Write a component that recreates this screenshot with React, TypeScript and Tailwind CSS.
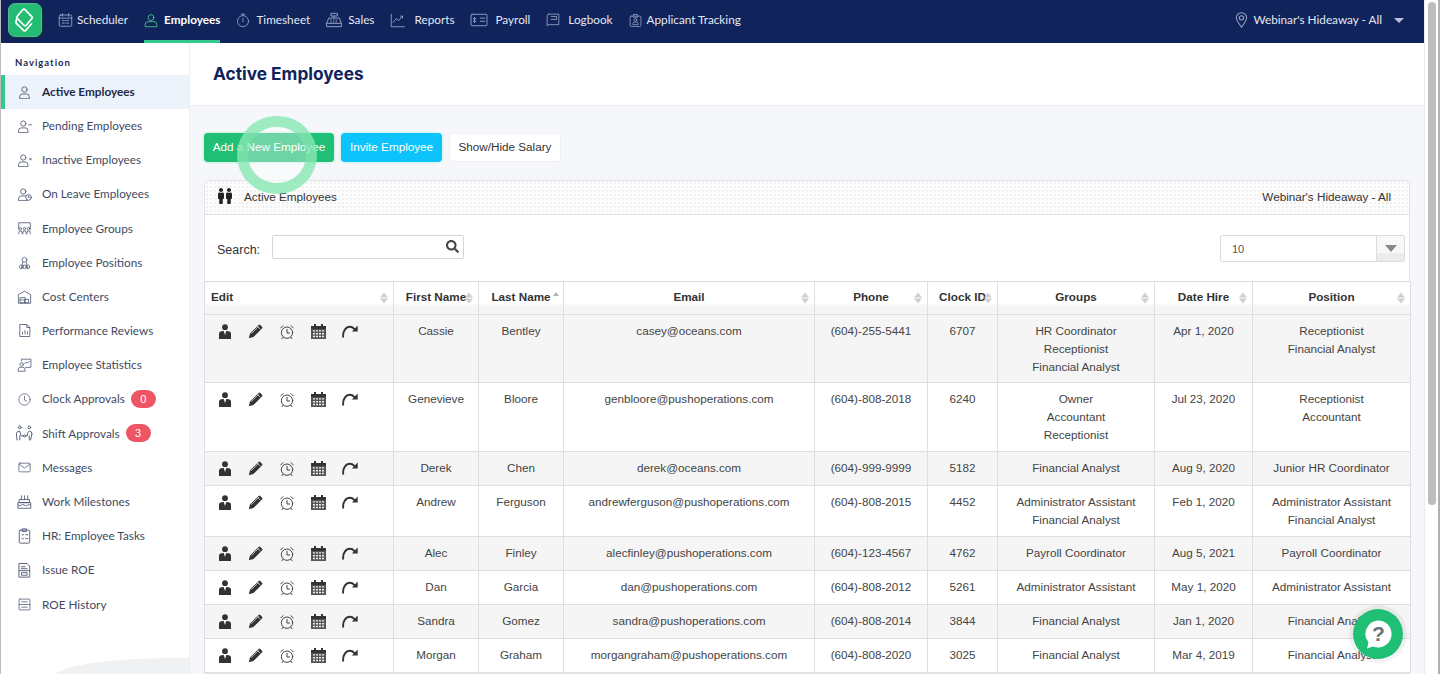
import React from "react";
import { FaSearch, FaMale } from "react-icons/fa";

type P = { children: React.ReactNode; w?: number; h?: number; vb?: string; c?: string };
const S = ({ children, w = 16, h = 16, vb = "0 0 24 24", c = "" }: P) => (
  <svg width={w} height={h} viewBox={vb} fill="none" stroke="currentColor" strokeWidth={1.4} strokeLinecap="round" strokeLinejoin="round" className={c}>
    {children}
  </svg>
);

const person = (
  <>
    <circle cx="10" cy="7" r="4.2" />
    <path d="M2.5 21v-2.5A4.5 4.5 0 0 1 7 14h6a4.5 4.5 0 0 1 4.5 4.5V21Z" />
  </>
);

const navItems: { label: string; icon: React.ReactNode; gap: string; active?: boolean }[] = [
  { label: "Scheduler", gap: "gap-[4px]", icon: <S w={15} h={16}><rect x="2" y="4" width="20" height="18" rx="2" /><path d="M7 2v4M17 2v4M2 9h20M7 13h2M11 13h2M15 13h2M7 17h2M11 17h2M15 17h2" /></S> },
  { label: "Employees", gap: "gap-[6px]", active: true, icon: <S w={14} h={17}><circle cx="12" cy="7" r="5" /><path d="M2 22v-3a5 5 0 0 1 5-5h10a5 5 0 0 1 5 5v3Z" /></S> },
  { label: "Timesheet", gap: "gap-[6px]", icon: <S w={14} h={16}><circle cx="12" cy="14" r="9.5" /><path d="M12 9v6M9 2h6M12 2v2.5" /></S> },
  { label: "Sales", gap: "gap-[6px]", icon: <S w={16} h={16}><rect x="8" y="2" width="9" height="4" /><path d="M12 6v3M5 9h15l3 8v5H1v-5ZM1 17h22M7 12h1M11 12h1M15 12h1M7 15h1M11 15h1M15 15h1" /></S> },
  { label: "Reports", gap: "gap-[9px]", icon: <S w={15} h={15}><path d="M2 2v20h21M5 15l5-6 4 3 6-7M17 5h3v3" /></S> },
  { label: "Payroll", gap: "gap-[7px]", icon: <S w={18} h={14} vb="0 0 28 22"><rect x="1.5" y="2" width="25" height="18" rx="1.5" /><path d="M16 8h7M16 13h7M7 7v8M5 9h4M5 13h4" /></S> },
  { label: "Logbook", gap: "gap-[8px]", icon: <S w={14} h={16}><path d="M5 2h17v18H5a3 3 0 0 0-3 2V5a3 3 0 0 1 3-3Z" /><path d="M9 6h9v5H9" /></S> },
  { label: "Applicant Tracking", gap: "gap-[5px]", icon: <S w={13} h={17}><rect x="2" y="4" width="20" height="19" rx="2" /><rect x="8" y="1" width="8" height="5" rx="1" /><circle cx="12" cy="11" r="2.6" /><path d="M7 19v-1a3 3 0 0 1 3-3h4a3 3 0 0 1 3 3v1Z" /></S> },
];

const sideItems: { label: string; icon: React.ReactNode; badge?: string; active?: boolean }[] = [
  { label: "Active Employees", active: true, icon: <S w={13} h={14} vb="0 0 20 22">{person}</S> },
  { label: "Pending Employees", icon: <S w={15} h={14} vb="0 0 24 22">{person}<path d="M19 9h4" /></S> },
  { label: "Inactive Employees", icon: <S w={15} h={14} vb="0 0 24 22">{person}<path d="m20 8 3 3M23 8l-3 3" /></S> },
  { label: "On Leave Employees", icon: <S w={15} h={14} vb="0 0 24 22">{person}<circle cx="18.5" cy="16.5" r="4.5" fill="#fff" /><path d="M18.5 14.5v2h1.6" /></S> },
  { label: "Employee Groups", icon: <S w={15} h={14}><path d="M2 14V3h20v11" /><circle cx="5" cy="13" r="2" /><circle cx="12" cy="13" r="2" /><circle cx="19" cy="13" r="2" /><path d="M2 22l1-5h4l1 5M9 22l1-5h4l1 5M16 22l1-5h4l1 5" /></S> },
  { label: "Employee Positions", icon: <S w={13} h={14}><circle cx="12" cy="6" r="4.5" /><path d="M9 10l-3 12M15 10l3 12" /><circle cx="6" cy="19" r="3.5" /><circle cx="12" cy="19" r="3.5" /><circle cx="18" cy="19" r="3.5" /></S> },
  { label: "Cost Centers", icon: <S w={15} h={14}><path d="M1.5 22V8L12 2l10.5 6v14Z" /><rect x="5" y="13" width="8" height="9" /><rect x="13" y="16" width="6" height="6" /><path d="M5 17h8" /></S> },
  { label: "Performance Reviews", icon: <S w={12} h={15} vb="0 0 20 24"><path d="M2 2h11l5 5v15H2Z" /><path d="M13 2v5h5M6 18v-3M10 18v-6M14 18v-4" /></S> },
  { label: "Employee Statistics", icon: <S w={15} h={14}><circle cx="7" cy="11" r="3" /><path d="M1 22v-2a4 4 0 0 1 4-4h4a4 4 0 0 1 4 4v2ZM7 5V2h16v14H14M12 10l3-3 2 2 3-3" /></S> },
  { label: "Clock Approvals", badge: "0", icon: <S w={13} h={13}><circle cx="12" cy="12" r="10.5" /><path d="M12 6v7l4 2" /></S> },
  { label: "Shift Approvals", badge: "3", icon: <S w={19} h={17} vb="0 0 28 25"><circle cx="7" cy="3.5" r="2" /><circle cx="21" cy="3.5" r="2" /><path d="M3 22l-1-9q0-4 5-4l2 7h3M25 13q0-4-4-4-2 0-3 7h-2M23 22l2-9M7 22v-6M21 22v-6" /><circle cx="14" cy="16" r="1.6" /></S> },
  { label: "Messages", icon: <S w={13} h={11} vb="0 0 24 20"><rect x="1.5" y="2" width="21" height="16" rx="2" /><path d="m2 4 10 7 10-7" /></S> },
  { label: "Work Milestones", icon: <S w={15} h={16}><path d="M7 2v6M12 2v6M17 2v6M4 8h16v5H4ZM2 13h20v9H2ZM2 17q3 2 5 0t5 0 5 0 5 0" /></S> },
  { label: "HR: Employee Tasks", icon: <S w={13} h={16} vb="0 0 20 24"><rect x="2" y="3" width="16" height="20" rx="1.5" /><rect x="7" y="1" width="6" height="4" /><path d="M6 10l1 1 2-2M12 10h3M6 16l1 1 2-2M12 16h3" /></S> },
  { label: "Issue ROE", icon: <S w={13} h={16} vb="0 0 20 24"><path d="M2 2h12l4 4v17H2Z" /><path d="M5 7h6M5 10h9M2 13h16M6 16h8v4H6Z" /></S> },
  { label: "ROE History", icon: <S w={13} h={13}><rect x="2" y="2" width="20" height="20" rx="1.5" /><path d="M7 7h10M2 12h20M7 17h10" /></S> },
];

type Row = { first: string; last: string; email: string; phone: string; id: string; groups: string[]; hire: string; pos: string[]; h: string };
const rows: Row[] = [
  { first: "Cassie", last: "Bentley", email: "casey@oceans.com", phone: "(604)-255-5441", id: "6707", groups: ["HR Coordinator", "Receptionist", "Financial Analyst"], hire: "Apr 1, 2020", pos: ["Receptionist", "Financial Analyst"], h: "h-[68px]" },
  { first: "Genevieve", last: "Bloore", email: "genbloore@pushoperations.com", phone: "(604)-808-2018", id: "6240", groups: ["Owner", "Accountant", "Receptionist"], hire: "Jul 23, 2020", pos: ["Receptionist", "Accountant"], h: "h-[69px]" },
  { first: "Derek", last: "Chen", email: "derek@oceans.com", phone: "(604)-999-9999", id: "5182", groups: ["Financial Analyst"], hire: "Aug 9, 2020", pos: ["Junior HR Coordinator"], h: "h-[34px]" },
  { first: "Andrew", last: "Ferguson", email: "andrewferguson@pushoperations.com", phone: "(604)-808-2015", id: "4452", groups: ["Administrator Assistant", "Financial Analyst"], hire: "Feb 1, 2020", pos: ["Administrator Assistant", "Financial Analyst"], h: "h-[51px]" },
  { first: "Alec", last: "Finley", email: "alecfinley@pushoperations.com", phone: "(604)-123-4567", id: "4762", groups: ["Payroll Coordinator"], hire: "Aug 5, 2021", pos: ["Payroll Coordinator"], h: "h-[34px]" },
  { first: "Dan", last: "Garcia", email: "dan@pushoperations.com", phone: "(604)-808-2012", id: "5261", groups: ["Administrator Assistant"], hire: "May 1, 2020", pos: ["Administrator Assistant"], h: "h-[34px]" },
  { first: "Sandra", last: "Gomez", email: "sandra@pushoperations.com", phone: "(604)-808-2014", id: "3844", groups: ["Financial Analyst"], hire: "Jan 1, 2020", pos: ["Financial Analyst"], h: "h-[34px]" },
  { first: "Morgan", last: "Graham", email: "morgangraham@pushoperations.com", phone: "(604)-808-2020", id: "3025", groups: ["Financial Analyst"], hire: "Mar 4, 2019", pos: ["Financial Analyst"], h: "h-[34px]" },
];

const Sort = ({ asc }: { asc?: boolean }) =>
  asc ? (
    <span className="absolute right-[4px] top-[10px] block w-0 h-0 border-x-[3px] border-x-transparent border-b-[4px] border-b-[#b5b5b5]" />
  ) : (
    <span className="absolute right-[5px] top-1/2 -translate-y-1/2 flex flex-col gap-[1px]">
      <span className="block w-0 h-0 border-x-[4px] border-x-transparent border-b-[5px] border-b-[#cfcfcf]" />
      <span className="block w-0 h-0 border-x-[4px] border-x-transparent border-t-[5px] border-t-[#cfcfcf]" />
    </span>
  );

const cols: { t: string; w: string; left?: boolean }[] = [
  { t: "Edit", w: "w-[189px]", left: true },
  { t: "First Name", w: "w-[85px]" },
  { t: "Last Name", w: "w-[85px]" },
  { t: "Email", w: "w-[251px]" },
  { t: "Phone", w: "w-[113px]" },
  { t: "Clock ID", w: "w-[70px]" },
  { t: "Groups", w: "w-[157px]" },
  { t: "Date Hire", w: "w-[98px]" },
  { t: "Position", w: "w-[158px]" },
];

const RowIcons = () => (
  <div className="flex items-center gap-[16px] pl-[12.5px] pt-[9px] h-[24px] text-[#333]">
    <svg width="14" height="15" viewBox="0 0 14 15" fill="#333"><circle cx="7" cy="3.2" r="2.9" /><path d="M1 15V9.5Q1 7.4 3.2 7.2L5.7 7 7 11l1.3-4 2.5.2Q13 7.4 13 9.5V15Z" /></svg>
    <svg width="15" height="15" viewBox="0 0 15 15" fill="#333"><path d="M.8 14.2 2 9.6 10.6 1a1.2 1.2 0 0 1 1.7 0L14 2.7a1.2 1.2 0 0 1 0 1.7L5.4 13Z" /><path d="M3.2 9.7 10.8 2.1M9.6 2.4l3 3" stroke="#f5f5f5" strokeWidth=".7" fill="none" /></svg>
    <svg width="16" height="16" viewBox="0 0 24 24" fill="none" stroke="#444" strokeWidth="1.5" strokeLinecap="round"><circle cx="12" cy="13" r="8.5" /><path d="M12 8v5.5h4M2.5 6 6 2.5M21.5 6 18 2.5M6 20l-1.5 2M18 20l1.5 2" /></svg>
    <svg width="15" height="15" viewBox="0 0 15 15"><path fill="#555" d="M0 2h15v13H0Z" /><path fill="#333" d="M0 2h15v3H0ZM3 0h2v3H3ZM10 0h2v3h-2Z" /><path fill="#eee" d="M2 6.2h2v1.4H2ZM5 6.2h2v1.4H5ZM8 6.2h2v1.4H8ZM11 6.2h2v1.4h-2ZM2 9h2v1.4H2ZM5 9h2v1.4H5ZM8 9h2v1.4H8ZM11 9h2v1.4h-2ZM2 11.8h2v1.4H2ZM5 11.8h2v1.4H5ZM8 11.8h2v1.4H8ZM11 11.8h2v1.4h-2Z" /></svg>
    <svg width="16" height="13" viewBox="0 0 16 13" fill="none"><path d="M1.2 11.8C.6 6 4 1.8 8 1.8c1.6 0 3 .7 4.2 2" stroke="#333" strokeWidth="1.9" strokeLinecap="round" /><path d="M15.7 .6v5.8h-5.8Z" fill="#333" /></svg>
  </div>
);

const cell = "border border-[#dedede] pt-[6.5px] align-top";

export default function App() {
  return (
    <div className="relative h-[674px] w-[1440px] overflow-hidden bg-white font-['Lato',sans-serif] flex">
      <div className="w-[1424px] flex flex-col border-l border-l-[#bdbdbd] shrink-0">
        {/* Top navigation */}
        <header className="h-[43px] shrink-0 bg-[#10235b] flex items-stretch text-[11.75px] text-[#e4e8f2]">
          <div className="ml-[7px] mt-[3px] w-[34px] h-[34px] rounded-[7px] bg-[#22bd72] border border-[#5fb592] shadow-[1px_1px_0_#0b3a3a] shrink-0">
            <svg width="32" height="32" viewBox="0 1 32 32" fill="none" stroke="#fff" strokeWidth="1.7" strokeLinejoin="round">
              <path d="M8 13.5 14 6.5a1.2 1.2 0 0 1 1.7-.1l7.3 7.4a1.2 1.2 0 0 1 0 1.6L17 22.5a1.2 1.2 0 0 1-1.7 0L8 15.2a1.2 1.2 0 0 1 0-1.7Z" />
              <path d="M8 14.5 7 19a1.5 1.5 0 0 0 .4 1.4l7.4 7.2a1.2 1.2 0 0 0 1.7 0l6.5-7.4" />
            </svg>
          </div>
          <nav className="ml-[16px] flex items-stretch gap-[16px]">
            {navItems.map((n) => (
              <div key={n.label} className={`relative flex items-center pb-[3px] ${n.gap} ${n.active ? "text-white font-bold" : ""}`}>
                <span className={n.active ? "text-[#4fd08f]" : "text-[#9aa7c7]"}>{n.icon}</span>
                <span className="whitespace-nowrap">{n.label}</span>
                {n.active && <span className="absolute left-0 right-0 bottom-0 h-[3px] bg-[#34c98a]" />}
              </div>
            ))}
          </nav>
          <div className="ml-auto mr-[20px] flex items-center pb-[3px]">
            <svg width="13" height="16" viewBox="0 0 16 22" fill="none" stroke="#9aa7c7" strokeWidth="1.4" className="mr-[5px]"><path d="M8 21C4 15 1 12 1 8a7 7 0 0 1 14 0c0 4-3 7-7 13Z" /><circle cx="8" cy="8" r="3" /></svg>
            <span className="mr-[1px]">Webinar's Hideaway - All</span>
            <span className="ml-[11px] w-0 h-0 border-x-[5px] border-x-transparent border-t-[5px] border-t-[#b9c2d9]" />
          </div>
        </header>

        <div className="flex-1 flex min-h-0">
          {/* Sidebar */}
          <aside className="relative w-[189px] shrink-0 bg-white border-r border-r-[#eceef2] text-[11.75px] text-[#414a63] overflow-hidden">
            <div className="h-[32px] pl-[14px] pt-[14px] text-[9.5px] leading-[12px] font-bold tracking-[1px] text-[#1b2a55]">Navigation</div>
            <ul className="flex flex-col">
              {sideItems.map((s) => (
                <li key={s.label} className={`h-[34.2px] flex items-center pb-[1px] ${s.active ? "bg-[#edf3fa] text-[#1f2a4a] font-bold border-l-[4px] border-l-[#34c98a]" : ""}`}>
                  <span className={`flex justify-center w-[19px] mr-[8px] text-[#525b75] shrink-0 ${s.active ? "ml-[10px]" : "ml-[14px]"}`}>{s.icon}</span>
                  <span className="whitespace-nowrap">{s.label}</span>
                  {s.badge && <span className="ml-[6px] h-[18px] w-[25px] rounded-full bg-[#ee5565] text-white text-[11px] font-['Liberation_Sans',sans-serif] flex items-center justify-center">{s.badge}</span>}
                </li>
              ))}
            </ul>
            <svg width="134" height="17" viewBox="0 0 134 17" fill="#f0f1f3" stroke="none" className="absolute right-0 bottom-0"><path d="M0 17C15 7 55 1 134 1v16Z" /></svg>
          </aside>

          {/* Main */}
          <main className="flex-1 min-w-0 bg-[#f5f7fb] font-['Liberation_Sans',sans-serif] text-[11.7px] text-[#333] overflow-hidden">
            <div className="h-[63px] bg-white border-b border-b-[#eceef2] pl-[23px] pt-[20px]">
              <h1 className="font-['Inter',sans-serif] font-bold text-[17.3px] leading-[22px] text-[#10235b]">Active Employees</h1>
            </div>
            <div className="pl-[14px] pr-[14px] pt-[27px]">
              <div className="flex gap-[7px] h-[29px]">
                <button className="w-[130px] pb-[1px] rounded-[4px] bg-[#1fbf75] text-white shadow-[0_0_3px_#9be8c0]">Add a New Employee</button>
                <button className="w-[101px] pb-[1px] rounded-[4px] bg-[#0cc4fb] text-white shadow-[0_0_3px_#9beee8]">Invite Employee</button>
                <button className="w-[112px] pb-[1px] rounded-[4px] bg-white text-[#333] border border-[#eef0f4]">Show/Hide Salary</button>
              </div>
              <section className="mt-[18px] bg-white border border-[#e4e4e4] rounded-t-[2px]">
                <div className="h-[34px] flex items-center justify-between pl-[12px] pr-[18px] pb-[2px] border-b border-b-[#e4e4e4] bg-[#fcfcfc] bg-[radial-gradient(#f0f0f0_1px,transparent_1px)] bg-[length:4px_4px]">
                  <div className="flex items-center">
                    <span className="flex mr-[11px] text-[#222]"><FaMale className="w-[8px] h-[16px]" /><FaMale className="w-[8px] h-[16px]" /></span>
                    <span>Active Employees</span>
                  </div>
                  <span>Webinar's Hideaway - All</span>
                </div>
                <div className="h-[66px] flex items-start justify-between pl-[12px] pr-[4px]">
                  <div className="flex items-end mt-[20px]">
                    <span className="text-[12.5px] leading-[16px] mr-[12px] pb-[1px]">Search:</span>
                    <div className="relative w-[192px] h-[24px] border border-[#d5d5d5] rounded-[2px] bg-white">
                      <FaSearch size={13} className="absolute right-[4px] top-[4px] text-[#444]" />
                    </div>
                  </div>
                  <div className="mt-[20px] flex w-[185px] h-[27px] border border-[#dcdcdc] rounded-[2px] text-[11px] text-[#555]">
                    <div className="flex-1 flex items-center pl-[11px] pt-[1px]">10</div>
                    <div className="w-[28px] border-l border-l-[#dcdcdc] bg-[linear-gradient(#f8f8f8_70%,#ececec_70%)] flex items-center justify-center">
                      <span className="w-0 h-0 border-x-[6px] border-x-transparent border-t-[7px] border-t-[#888]" />
                    </div>
                  </div>
                </div>
                <table className="table-fixed w-[1206px] -ml-[1px] border-collapse">
                  <thead>
                    <tr className="h-[33px]">
                      {cols.map((c) => (
                        <th key={c.t} className={`${c.w} relative border border-[#dedede] pb-[2px] font-bold text-[#333] bg-[linear-gradient(#fff_68%,#f5f5f5_68%)] ${c.left ? "text-left pl-[6px]" : "text-center"}`}>
                          {c.t}
                          <Sort asc={c.t === "Last Name"} />
                        </th>
                      ))}
                    </tr>
                  </thead>
                  <tbody>
                    {rows.map((r, i) => (
                      <tr key={r.first} className={`${r.h} ${i % 2 === 0 ? "bg-[#f5f5f5]" : "bg-white"} text-center align-top leading-[18px] text-[#444]`}>
                        <td className="border border-[#dedede] align-top"><RowIcons /></td>
                        <td className={cell}>{r.first}</td>
                        <td className={cell}>{r.last}</td>
                        <td className={cell}>{r.email}</td>
                        <td className={cell}>{r.phone}</td>
                        <td className={cell}>{r.id}</td>
                        <td className={cell}>{r.groups.map((g) => <div key={g}>{g}</div>)}</td>
                        <td className={cell}>{r.hire}</td>
                        <td className={cell}>{r.pos.map((g) => <div key={g}>{g}</div>)}</td>
                      </tr>
                    ))}
                  </tbody>
                </table>
              </section>
            </div>
          </main>
        </div>
      </div>

      {/* Scrollbar strip */}
      <div className="flex-1 flex bg-white border-l border-l-[#ececec] pl-[3px] pt-[2px]">
        <div className="w-[8px] h-[503px] rounded-[4px] bg-[#bdbdbd]" />
        <div className="ml-auto -mt-[2px] w-[2px] h-[674px] bg-[#b0b0b0]" />
      </div>

      {/* Click ripple */}
      <div className="absolute left-[237px] top-[116px] w-[80px] h-[78px] rounded-full border-[11px] border-[rgba(120,228,168,0.7)] bg-[rgba(255,255,255,0.35)] blur-[0.5px] pointer-events-none" />

      {/* Help bubble */}
      <div className="absolute left-[1353px] top-[609px] w-[50px] h-[50px] rounded-full bg-[#1fbf75] shadow-[0_0_0_4px_rgba(0,0,0,0.05)] flex items-center justify-center">
        <svg width="32" height="32" viewBox="0 0 32 32">
          <path fill="#fff" d="M16 2.5a13.5 13.5 0 1 1-5 26L5 30.5l1.5-6A13.5 13.5 0 0 1 16 2.5Z" />
          <text x="16.5" y="23" textAnchor="middle" fontFamily="Liberation Sans, sans-serif" fontWeight="700" fontSize="21" fill="#6a7378">?</text>
        </svg>
      </div>
    </div>
  );
}
